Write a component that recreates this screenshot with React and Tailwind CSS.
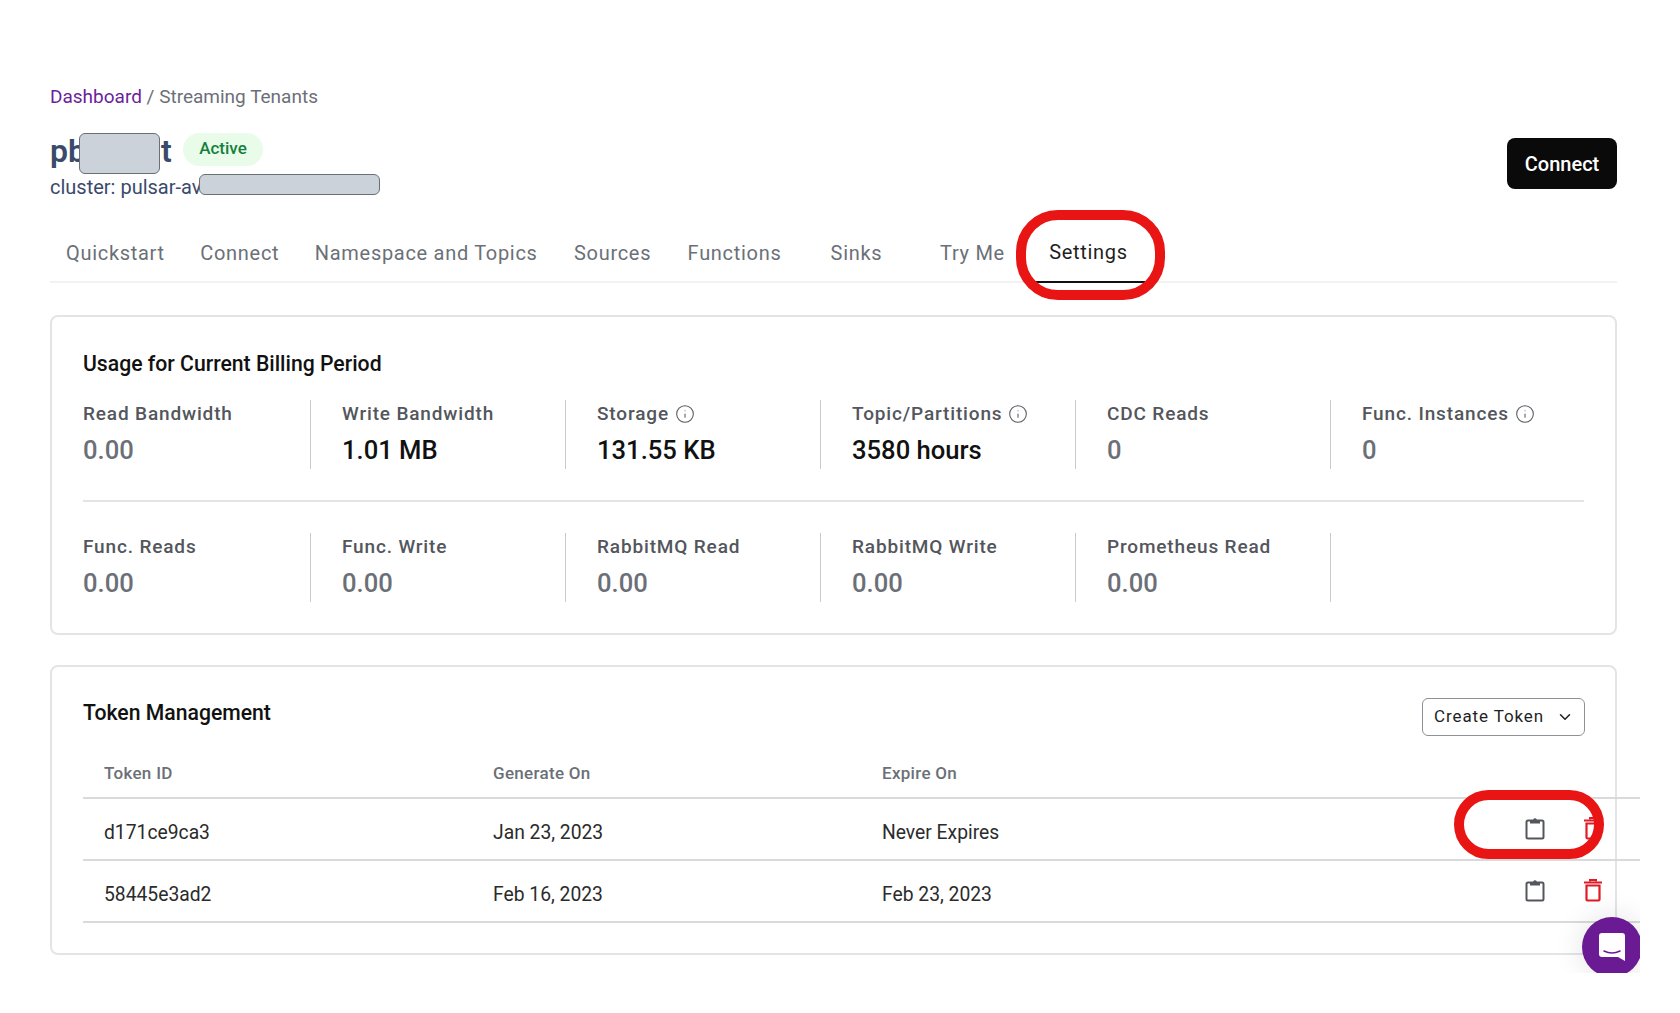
import React from 'react';
import { ChevronDown, Info } from 'lucide-react';

const tabs = ['Quickstart', 'Connect', 'Namespace and Topics', 'Sources', 'Functions', 'Sinks', 'Try Me', 'Settings'];

const usageRows = [
  [
    { label: 'Read Bandwidth', value: '0.00' },
    { label: 'Write Bandwidth', value: '1.01 MB', strong: true },
    { label: 'Storage', value: '131.55 KB', strong: true, info: true },
    { label: 'Topic/Partitions', value: '3580 hours', strong: true, info: true },
    { label: 'CDC Reads', value: '0' },
    { label: 'Func. Instances', value: '0', info: true },
  ],
  [
    { label: 'Func. Reads', value: '0.00' },
    { label: 'Func. Write', value: '0.00' },
    { label: 'RabbitMQ Read', value: '0.00' },
    { label: 'RabbitMQ Write', value: '0.00' },
    { label: 'Prometheus Read', value: '0.00' },
    { label: '', value: '' },
  ],
];

const tokens = [
  { id: 'd171ce9ca3', generated: 'Jan 23, 2023', expires: 'Never Expires' },
  { id: '58445e3ad2', generated: 'Feb 16, 2023', expires: 'Feb 23, 2023' },
];

function ClipboardIcon() {
  return (
    <svg width="20" height="24" viewBox="0 0 20 24" fill="none" className="text-[#53565c]">
      <path d="M5 4.500H3a1.500 1.500 0 0 0-1.500 1.500v15A1.500 1.500 0 0 0 3 22.500h14a1.500 1.500 0 0 0 1.500-1.500V6A1.500 1.500 0 0 0 17 4.500h-2" stroke="currentColor" strokeWidth="2" />
      <path d="M5 3.500h3.200a1.900 1.900 0 0 1 3.600 0H15V7.500H5z" fill="currentColor" />
    </svg>
  );
}

function TrashIcon() {
  return (
    <svg width="20" height="24" viewBox="0 0 20 24" fill="none" className="text-[#e01b24]">
      <path d="M1 4.500h18" stroke="currentColor" strokeWidth="2" />
      <path d="M7 3.500V2h6v1.500" stroke="currentColor" strokeWidth="2" />
      <path d="M3.500 7.500v14a1 1 0 0 0 1 1h11a1 1 0 0 0 1-1v-14z" stroke="currentColor" strokeWidth="2.200" />
    </svg>
  );
}

function Metric({ item, first, last }) {
  return (
    <div className={`h-[69px] shrink-0 ${first ? 'w-[228px]' : last ? 'w-[250px] pl-[31px]' : 'w-[255px] pl-[31px]'} ${last ? '' : 'border-r border-[#c9cacc]'}`}>
      <div className="flex h-[28px] items-center gap-[6px] text-[19px] font-medium tracking-[0.85px] text-[#53565c]">
        <span>{item.label}</span>
        {item.info && <Info size={20} strokeWidth={1.25} className="text-[#53565c]" />}
      </div>
      <div className={`mt-[5px] text-[25.6px] leading-[34px] font-medium ${item.strong ? 'text-[#111111]' : 'text-[#6b7078]'}`}>
        {item.value}
      </div>
    </div>
  );
}

export default function App() {
  return (
    <div className="h-[1013px] w-[1680px] bg-white font-['Roboto',sans-serif]">
      <div className="relative h-[973px] w-[1640px] overflow-hidden pl-[50px] pt-[85px]">
        <div className="w-[1567px]">
          {/* Breadcrumb */}
          <div className="text-[19px] leading-[24px] text-[#6b7078]">
            <span className="text-[#6b1f9b]">Dashboard</span> / Streaming Tenants
          </div>

          {/* Header */}
          <div className="mt-[20px] flex items-start justify-between">
            <div>
              <div className="flex h-[44px] items-center">
                <div className="relative w-[122px] text-[32px] font-semibold text-[#3a4a6b]">
                  <span>pb</span>
                  <span className="ml-[75px]">t</span>
                  <div className="absolute left-[29px] top-[6px] h-[41px] w-[81px] rounded-[6px] border border-[#6b7078] bg-[#ccd2da]" />
                </div>
                <span className="ml-[11px] mt-[-4px] flex h-[33px] w-[80px] items-center justify-center rounded-full bg-[#e9fbe9] text-[17px] font-medium text-[#15803d]">
                  Active
                </span>
              </div>
              <div className="relative mt-[2px] text-[20px] leading-[24px] text-[#3a4a6b]">
                cluster: pulsar-av
                <div className="absolute left-[149px] top-[-1px] h-[21px] w-[181px] rounded-[6px] border border-[#6b7078] bg-[#ccd2da]" />
              </div>
            </div>
            <button className="mt-[9px] h-[51px] w-[110px] rounded-[8px] bg-[#0a0a0a] text-[20px] font-medium text-white">
              Connect
            </button>
          </div>

          {/* Tabs */}
          <div className="mt-[22px] flex h-[62px] gap-[2px] border-b-2 border-[#f2f2f2]">
            {tabs.map((tab) => (
              <div
                key={tab}
                className={`flex h-[62px] min-w-[114px] items-center justify-center px-[16px] pt-[1px] text-[20px] tracking-[0.7px] ${
                  tab === 'Settings' ? 'border-b-2 border-[#111111] text-[#1f1f1f]' : 'text-[#6b7078]'
                }`}
              >
                {tab}
              </div>
            ))}
          </div>

          {/* Usage */}
          <div className="mt-[32px] h-[320px] rounded-[8px] border-2 border-[#e3e4e6] px-[31px] pt-[33px]">
            <h3 className="text-[21.2px] leading-[28px] font-medium text-[#111111]">Usage for Current Billing Period</h3>
            <div className="mt-[22px] flex">
              {usageRows[0].map((item, idx) => (
                <Metric key={item.label} item={item} first={idx === 0} last={idx === 5} />
              ))}
            </div>
            <div className="my-[31px] h-[2px] bg-[#e3e4e6]" />
            <div className="flex">
              {usageRows[1].map((item, idx) => (
                <Metric key={idx} item={item} first={idx === 0} last={idx === 5} />
              ))}
            </div>
          </div>

          {/* Tokens */}
          <div className="mt-[30px] h-[290px] rounded-[8px] border-2 border-[#e3e4e6] pl-[31px] pr-[30px] pt-[30px]">
            <div className="flex items-start justify-between">
              <h3 className="mt-[2px] text-[21.2px] leading-[28px] font-medium text-[#111111]">Token Management</h3>
              <button className="mt-[1px] flex h-[38px] w-[163px] items-center justify-between rounded-[6px] border border-[#8f9196] pl-[11px] pr-[10px] text-[17px] tracking-[0.9px] text-[#1f1f1f]">
                Create Token
                <ChevronDown size={18} strokeWidth={2} />
              </button>
            </div>
            <div className="mt-[14px] w-[1557px]">
              <div className="grid h-[49px] grid-cols-[389px_389px_1fr] items-center border-b-2 border-[#d9dadc] pl-[21px] text-[17px] font-medium tracking-[0.3px] text-[#6b7078]">
                <span>Token ID</span>
                <span>Generate On</span>
                <span>Expire On</span>
              </div>
              {tokens.map((t) => (
                <div key={t.id} className="grid h-[62px] grid-cols-[389px_389px_1fr] items-center border-b-2 border-[#d9dadc] pl-[21px] pt-[8px] text-[19.3px] text-[#2b2b2b]">
                  <span>{t.id}</span>
                  <span>{t.generated}</span>
                  <div className="flex items-center justify-between">
                    <span>{t.expires}</span>
                    <div className="mr-[37px] mt-[-10px] flex items-center gap-[38px]">
                      <ClipboardIcon />
                      <TrashIcon />
                    </div>
                  </div>
                </div>
              ))}
            </div>
          </div>
        </div>

        {/* Red annotation rings */}
        <div className="absolute left-[1016px] top-[210px] h-[90px] w-[149px] rounded-[42px] border-[10px] border-[#e91414]" />
        <div className="absolute left-[1454px] top-[790px] h-[69px] w-[150px] rounded-full border-[10px] border-[#e91414]" />

        {/* Chat bubble */}
        <div className="absolute left-[1582px] top-[917px] flex h-[60px] w-[60px] items-center justify-center rounded-full bg-[#6a1b94] shadow-[0_0_30px_rgba(0,0,0,0.12)]">
          <svg width="30" height="32" viewBox="0 0 30 32">
            <path d="M5 2h20a3 3 0 0 1 3 3v25l-7-4H5a3 3 0 0 1-3-3V5a3 3 0 0 1 3-3z" fill="#ffffff" />
            <path d="M7 20c5 2.500 11 2.500 16 0" stroke="#6a1b94" strokeWidth="1.500" fill="none" strokeLinecap="round" />
          </svg>
        </div>
      </div>
    </div>
  );
}
